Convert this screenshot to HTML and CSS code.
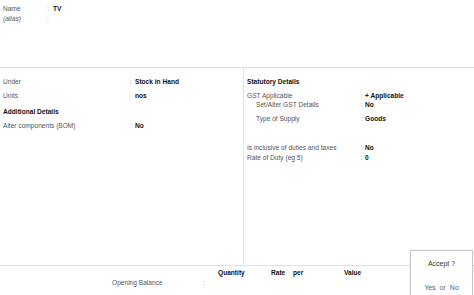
FILE: index.html
```html
<!DOCTYPE html>
<html>
<head>
<meta charset="utf-8">
<link rel="stylesheet" href="styles.css">
</head>
<body>
<div class="page">
  <section class="top">
    <div class="row"><span class="lbl w-top">Name</span><span class="col">:</span><span class="val">TV</span></div>
    <div class="row"><span class="lbl w-top ital">(alias)</span><span class="col">:</span><span class="val"></span></div>
  </section>
  <section class="mid">
    <div class="left">
      <div class="lrow"><span class="lbl w-left">Under</span><span class="col">:</span><span class="val">Stock in Hand</span></div>
      <div class="lrow"><span class="lbl w-left">Units</span><span class="col">:</span><span class="val">nos</span></div>
      <div class="lrow head add">Additional Details</div>
      <div class="lrow"><span class="lbl w-left">Alter components (BOM)</span><span class="col">:</span><span class="val">No</span></div>
    </div>
    <div class="right">
      <div class="rrow head">Statutory Details</div>
      <div class="rrow gst"><span class="lbl w-right">GST Applicable</span><span class="col">:</span><span class="val">+ Applicable</span></div>
      <div class="rrow setalter sub"><span class="lbl w-right-sub">Set/Alter GST Details</span><span class="col">:</span><span class="val">No</span></div>
      <div class="rrow type sub"><span class="lbl w-right-sub">Type of Supply</span><span class="col">:</span><span class="val">Goods</span></div>
      <div class="rrow incl"><span class="lbl w-right">Is inclusive of duties and taxes</span><span class="col">:</span><span class="val">No</span></div>
      <div class="rrow"><span class="lbl w-right">Rate of Duty (eg 5)</span><span class="col">:</span><span class="val">0</span></div>
    </div>
  </section>
  <section class="bottom">
    <div class="heads">
      <span class="h-qty">Quantity</span>
      <span class="h-rate">Rate</span>
      <span class="h-per">per</span>
      <span class="h-val">Value</span>
    </div>
    <div class="ob"><span class="ob-lbl">Opening Balance</span><span class="col">:</span></div>
  </section>
  <div class="accept">
    <div class="acc-title">Accept ?</div>
    <div class="acc-opts"><span class="yn">Yes</span><span class="or">or</span><span class="yn">No</span></div>
  </div>
</div>
</body>
</html>
```
FILE: styles.css
```css
html, body {
  margin: 0;
  padding: 0;
  background: #fff;
}
body {
  font-family: "Liberation Sans", Arial, sans-serif;
  font-size: 6.6px;
  color: #555;
}
.page {
  position: relative;
  width: 474px;
  height: 295px;
  overflow: hidden;
}
.top {
  height: 68px;
  box-sizing: border-box;
  border-bottom: 1px solid #e2e2e2;
  padding: 4px 0 0 3px;
}
.row {
  display: flex;
  height: 10px;
  line-height: 10px;
}
.lbl { flex: none; }
.ital { font-style: italic; }
.col { flex: none; color: #999; }
.val { color: #111; font-weight: bold; }
.w-top { width: 44px; }
.top .col { width: 6px; }
.mid {
  display: flex;
  height: 198px;
  border-bottom: 1px solid #e2e2e2;
  box-sizing: border-box;
}
.left {
  width: 244px;
  flex: none;
  box-sizing: border-box;
  border-right: 1px solid #e2e2e2;
  padding: 7px 0 0 3px;
}
.lrow {
  display: flex;
  height: 14px;
  line-height: 14px;
}
.w-left { width: 127px; }
.left .col { width: 5px; }
.head {
  color: #111;
  font-weight: bold;
}
.add { margin-top: 2px; }
.right {
  flex: 1;
  padding: 9px 0 0 3px;
}
.rrow {
  display: flex;
  height: 10px;
  line-height: 10px;
}
.w-right { width: 114px; }
.w-right-sub { width: 105px; }
.sub { padding-left: 9px; }
.right .col { width: 4px; }
.gst { margin-top: 4px; }
.setalter { margin-top: -1px; }
.type { margin-top: 4px; }
.incl { margin-top: 19px; }
.bottom {
  position: relative;
  height: 28px;
}
.heads {
  display: flex;
  padding: 2px 0 0 218px;
  height: 9px;
  line-height: 9px;
  color: #111;
  font-weight: bold;
}
.h-qty { width: 53px; }
.h-rate { width: 22px; }
.h-per { width: 51px; }
.ob {
  display: flex;
  padding: 1px 0 0 112px;
  line-height: 10px;
}
.ob-lbl { width: 91px; }
.accept {
  position: absolute;
  left: 410px;
  top: 250px;
  width: 63px;
  height: 50px;
  box-sizing: border-box;
  border: 1px solid #c8c8c8;
  background: #fff;
  box-shadow: 0 0 2px rgba(0,0,0,0.12);
  display: flex;
  flex-direction: column;
  align-items: center;
  font-size: 7px;
}
.acc-title {
  margin-top: 8px;
  color: #333;
  line-height: 10px;
}
.acc-opts {
  margin-top: 14px;
  line-height: 10px;
  display: flex;
  gap: 4px;
}
.yn { color: #35609e; }
.or { color: #666; }
```
